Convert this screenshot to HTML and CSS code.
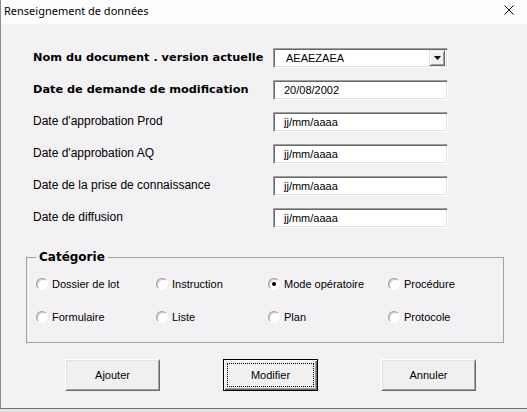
FILE: index.html
```html
<!DOCTYPE html>
<html lang="fr">
<head>
<meta charset="utf-8">
<title>Renseignement de données</title>
<link rel="stylesheet" href="styles.css">
</head>
<body>
<div class="window">
  <div class="titlebar">
    <span class="title">Renseignement de données</span>
    <svg class="close" width="10" height="10" viewBox="0 0 10 10"><path d="M0.5 0.5 L9.5 9.5 M9.5 0.5 L0.5 9.5" stroke="#000" stroke-width="1" fill="none"/></svg>
  </div>
  <div class="content">
    <div class="form">
      <div class="lbl bold">Nom du document . version actuelle</div>
      <div class="field combo"><span class="val">AEAEZAEA</span><span class="dropbtn"><svg width="7" height="4" viewBox="0 0 7 4"><path d="M0 0 H7 L3.5 4 Z" fill="#000"/></svg></span></div>
      <div class="lbl bold">Date de demande de modification</div>
      <div class="field"><span class="val">20/08/2002</span></div>
      <div class="lbl">Date d'approbation Prod</div>
      <div class="field"><span class="val">jj/mm/aaaa</span></div>
      <div class="lbl">Date d'approbation AQ</div>
      <div class="field"><span class="val">jj/mm/aaaa</span></div>
      <div class="lbl">Date de la prise de connaissance</div>
      <div class="field"><span class="val">jj/mm/aaaa</span></div>
      <div class="lbl">Date de diffusion</div>
      <div class="field"><span class="val">jj/mm/aaaa</span></div>
    </div>
    <fieldset class="cat">
      <legend>Catégorie</legend>
      <div class="radios">
        <div class="opt"><span class="radio"></span>Dossier de lot</div>
        <div class="opt"><span class="radio"></span>Instruction</div>
        <div class="opt"><span class="radio on"></span>Mode opératoire</div>
        <div class="opt"><span class="radio"></span>Procédure</div>
        <div class="opt"><span class="radio"></span>Formulaire</div>
        <div class="opt"><span class="radio"></span>Liste</div>
        <div class="opt"><span class="radio"></span>Plan</div>
        <div class="opt"><span class="radio"></span>Protocole</div>
      </div>
    </fieldset>
    <div class="buttons">
      <div class="btn"><span>Ajouter</span></div>
      <div class="btn default"><span class="focus">Modifier</span></div>
      <div class="btn"><span>Annuler</span></div>
    </div>
  </div>
  <div class="under"></div>
</div>
</body>
</html>
```

FILE: styles.css
```css
html, body {
  margin: 0;
  padding: 0;
  background: #e8e8e8;
}
.window {
  width: 527px;
  height: 412px;
  display: flex;
  flex-direction: column;
  overflow: hidden;
}
.titlebar {
  height: 24px;
  flex: none;
  background: #fdfefd;
  border-left: 1px solid #8a8a8a;
  display: flex;
  align-items: center;
  justify-content: space-between;
  padding: 0 13px 0 3px;
  box-sizing: border-box;
}
.title {
  font-family: "Noto Sans", sans-serif;
  font-size: 11px;
  color: #000;
  margin-top: -3px;
}
.close {
  display: block;
  margin-top: -4px;
}
.content {
  height: 385px;
  flex: none;
  box-sizing: border-box;
  background: #f3f1f4;
  border-left: 1px solid #8a8a8a;
  border-bottom: 1px solid #6f6f6f;
  padding-top: 24px;
}
.under {
  flex: 1;
  background: #e4e4e4;
}
.form {
  display: grid;
  grid-template-columns: 240px 175px;
  grid-auto-rows: 20px;
  row-gap: 12px;
  padding-left: 32px;
}
.lbl {
  font-family: "Liberation Sans", Arial, sans-serif;
  font-size: 12px;
  color: #000;
  display: flex;
  align-items: center;
  margin-top: -2px;
  white-space: nowrap;
}
.lbl.bold {
  font-family: "DejaVu Sans", sans-serif;
  font-weight: bold;
  font-size: 11.3px;
}
.field {
  box-sizing: border-box;
  background: #fff;
  border-style: solid;
  border-width: 1px;
  border-color: #a0a0a0 #ffffff #ffffff #a0a0a0;
  box-shadow: inset 1px 1px 0 #696969, inset -1px -1px 0 #e3e3e3;
  display: flex;
  align-items: center;
  padding-left: 10px;
  font-family: "Liberation Sans", Arial, sans-serif;
  font-size: 11px;
  color: #000;
}
.combo {
  justify-content: space-between;
  padding-right: 2px;
}
.combo .val {
  margin-left: 2px;
}
.dropbtn {
  width: 16px;
  height: 16px;
  box-sizing: border-box;
  background: #f0f0f0;
  border-style: solid;
  border-width: 1px;
  border-color: #e3e3e3 #696969 #696969 #e3e3e3;
  box-shadow: inset 1px 1px 0 #fff, inset -1px -1px 0 #a0a0a0;
  display: flex;
  align-items: center;
  justify-content: center;
}
.dropbtn svg {
  display: block;
}
.cat {
  margin: 22px 23px 0 25px;
  padding: 0 0 18px 9px;
  border: 1px solid #a0a0a0;
  min-width: 0;
}
.cat legend {
  font-family: "DejaVu Sans", sans-serif;
  font-weight: bold;
  font-size: 12px;
  line-height: 14px;
  padding: 0 3px;
  color: #000;
}
.radios {
  display: grid;
  grid-template-columns: 120px 112px 120px 120px;
  grid-auto-rows: 14px;
  row-gap: 19px;
  padding-top: 13px;
}
.opt {
  display: flex;
  align-items: center;
  font-family: "Liberation Sans", Arial, sans-serif;
  font-size: 11px;
  color: #000;
  white-space: nowrap;
}
.radio {
  width: 12px;
  height: 12px;
  box-sizing: border-box;
  border-radius: 50%;
  border: 1px solid;
  border-color: #a0a0a0 #ffffff #ffffff #a0a0a0;
  background: #fff;
  box-shadow: inset 1px 1px 0 #c8c8c8;
  margin-right: 4px;
  display: flex;
  align-items: center;
  justify-content: center;
  flex: none;
}
.radio.on::after {
  content: "";
  width: 4px;
  height: 4px;
  border-radius: 50%;
  background: #000;
}
.buttons {
  display: flex;
  gap: 63px;
  padding-left: 64px;
  margin-top: 16px;
}
.btn {
  width: 95px;
  height: 32px;
  box-sizing: border-box;
  background: #f0f0f0;
  border-style: solid;
  border-width: 1px;
  border-color: #ffffff #696969 #696969 #ffffff;
  box-shadow: inset 1px 1px 0 #e3e3e3, inset -1px -1px 0 #a0a0a0;
  display: flex;
  align-items: center;
  justify-content: center;
  font-family: "Liberation Sans", Arial, sans-serif;
  font-size: 11px;
  color: #000;
}
.btn.default {
  border: 1px solid #000;
  box-shadow: inset 1px 1px 0 #fff, inset -1px -1px 0 #696969, inset -2px -2px 0 #a0a0a0;
  padding: 3px;
}
.btn .focus {
  flex: 1;
  align-self: stretch;
  display: flex;
  align-items: center;
  justify-content: center;
  border: 1px dotted #000;
}
```
